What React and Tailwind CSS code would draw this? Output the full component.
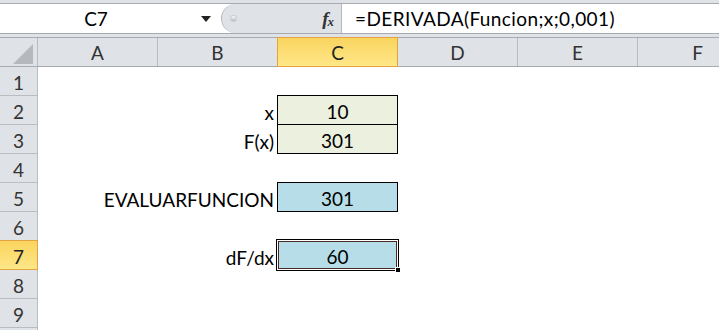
import React from "react";

const F = { fontFamily: "Lato, 'Open Sans', sans-serif" };

const cols = ["A", "B", "C", "D", "E", "F"];

function RowHeader({ n, active }) {
  return (
    <div
      className={
        "w-[38px] h-[29px] shrink-0 flex items-end justify-center pb-[3px] text-[19px] leading-none border-r border-b " +
        (active
          ? "bg-gradient-to-b from-[#f9d45e] to-[#ffe787] border-[#e3a33f] border-t -mt-px h-[30px] text-[#222]"
          : "bg-[#dfe2e6] border-[#b9bcc1] text-[#333]")
      }
    >
      {n}
    </div>
  );
}

function Label({ children }) {
  return (
    <div className="w-[120px] h-[29px] shrink-0 flex items-end justify-end pr-[4px] pb-[3px] text-[19px] leading-none text-black">
      {children}
    </div>
  );
}

function Empty() {
  return <div className="w-[120px] h-[29px] shrink-0" />;
}

function Box({ children, bg }) {
  return (
    <div
      className={
        "w-[121px] h-[30px] -ml-px -mt-px shrink-0 self-start border border-black flex items-end justify-center pb-[3px] text-[19px] leading-none text-black " +
        bg
      }
    >
      {children}
    </div>
  );
}

function Row({ n, b, c, cbg, active, selected }) {
  return (
    <div className="flex h-[29px]">
      <RowHeader n={n} active={active} />
      <Empty />
      {b ? <Label>{b}</Label> : <Empty />}
      {selected ? (
        <div className="relative w-[123px] h-[32px] -ml-[2px] -mt-[2px] shrink-0 self-start border border-black bg-[#b7dee8] shadow-[inset_0_0_0_1px_#ffffff,inset_0_0_0_2px_#4a2a20] flex items-end justify-center pb-[4px] text-[19px] leading-none text-black">
          {c}
          <div className="absolute right-[-3px] bottom-[-3px] w-[6px] h-[6px] bg-black border border-white" />
        </div>
      ) : c ? (
        <Box bg={cbg}>{c}</Box>
      ) : (
        <Empty />
      )}
    </div>
  );
}

export default function App() {
  return (
    <div className="w-[719px] h-[330px] overflow-hidden bg-white select-none" style={F}>
      {/* formula bar */}
      <div className="h-[37px] bg-[#dfe2e6] pt-[3px]">
        <div className="h-[31px] flex border-t border-b border-[#a7abb0] bg-white">
          <div className="w-[192px] flex items-center justify-center text-[19px] text-black pt-[1px]">C7</div>
          <div className="w-[29px] flex items-center justify-start pl-[9px]">
            <div className="w-0 h-0 border-l-[5px] border-r-[5px] border-t-[6px] border-l-transparent border-r-transparent border-t-[#222]" />
          </div>
          <div className="w-[120px] flex items-center bg-[#dfe2e6] rounded-l-full border-l border-[#b6b9bd] pl-[8px] pr-[7px] justify-between">
            <div className="w-[7px] h-[7px] rounded-full bg-gradient-to-b from-white to-[#b9bcc0] border border-[#c6c8cc]" />
            <div className="flex items-end text-[#333] italic font-bold leading-none" style={{ fontFamily: "'Liberation Serif', serif" }}>
              <span className="text-[19px]">f</span>
              <span className="text-[13px] -ml-[1px]">x</span>
            </div>
          </div>
          <div className="w-px bg-[#b6b9bd]" />
          <div className="flex-1 flex items-center pl-[13px] text-[19px] tracking-[0.4px] text-black pt-[1px] whitespace-nowrap">
            =DERIVADA(Funcion;x;0,001)
          </div>
        </div>
      </div>
      {/* column headers */}
      <div className="flex h-[30px] border-t border-b border-[#a7abb0] bg-[#dfe2e6]">
        <div className="w-[38px] shrink-0 border-r border-[#b9bcc1] relative flex items-end justify-end pr-[4px] pb-[2px]">
          <svg width="20" height="20" viewBox="0 0 20 20">
            <polygon points="0,20 20,0 20,20" fill="#b5b9be" />
          </svg>
        </div>
        {cols.map((c) =>
          c === "C" ? (
            <div
              key={c}
              className="w-[121px] -ml-px -mt-px h-[30px] shrink-0 bg-gradient-to-b from-[#f9d45e] to-[#ffe787] border border-[#e3a33f] flex items-end justify-center pb-[4px] text-[19px] leading-none text-[#222]"
            >
              {c}
            </div>
          ) : (
            <div
              key={c}
              className="w-[120px] shrink-0 border-r border-[#b9bcc1] flex items-end justify-center pb-[4px] text-[19px] leading-none text-[#333]"
            >
              {c}
            </div>
          )
        )}
      </div>
      <Row n={1} />
      <Row n={2} b="x" c="10" cbg="bg-[#ebf1de]" />
      <Row n={3} b="F(x)" c="301" cbg="bg-[#ebf1de]" />
      <Row n={4} />
      <Row n={5} b="EVALUARFUNCION" c="301" cbg="bg-[#b7dee8]" />
      <Row n={6} />
      <Row n={7} b="dF/dx" c="60" active selected />
      <Row n={8} />
      <Row n={9} />
      <Row n="" />
    </div>
  );
}
